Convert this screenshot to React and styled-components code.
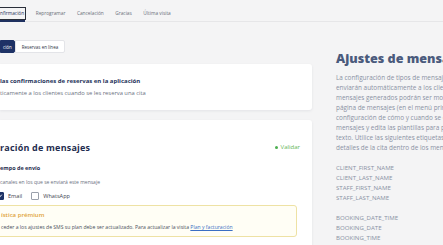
import React from "react"
import styled, { createGlobalStyle } from "styled-components"

const GlobalStyle = createGlobalStyle`
  html, body {
    margin: 0;
    padding: 0;
    background: #f4f4f5;
    overflow: hidden;
  }
  body {
    font-family: "Open Sans", "Liberation Sans", sans-serif;
    color: #3a3f4b;
  }
`

const tabs = ["nfirmación", "Reprogramar", "Cancelación", "Gracias", "Última visita"]

const paragraph = [
  "La configuración de tipos de mensajes que se",
  "enviarán automáticamente a los clientes. Los",
  "mensajes generados podrán ser modificados en la",
  "página de mensajes (en el menú principal). Cambia la",
  "configuración de cómo y cuando se envían los",
  "mensajes y edita las plantillas para personalizar el",
  "texto. Utilice las siguientes etiquetas para insertar los",
  "detalles de la cita dentro de los mensajes:",
]

const tagGroups = [
  ["CLIENT_FIRST_NAME", "CLIENT_LAST_NAME", "STAFF_FIRST_NAME", "STAFF_LAST_NAME"],
  ["BOOKING_DATE_TIME", "BOOKING_DATE", "BOOKING_TIME"],
]

const App = () => {
  return (
    <>
      <GlobalStyle />
      <Screen>
        <TabBar>
          {tabs.map((t, i) => (
            <Tab key={t} active={i === 0}>
              <TabLabel active={i === 0}>{t}</TabLabel>
            </Tab>
          ))}
        </TabBar>
        <Columns>
          <Main>
            <ToggleGroup>
              <ToggleButton active>ción</ToggleButton>
              <ToggleButton>Reservas en línea</ToggleButton>
            </ToggleGroup>

            <Card>
              <CardTitle>las confirmaciones de reservas en la aplicación</CardTitle>
              <CardText>ticamente a los clientes cuando se les reserva una cita</CardText>
            </Card>

            <Card tall>
              <CardHeader>
                <BigTitle>ración de mensajes</BigTitle>
                <Status>Validar</Status>
              </CardHeader>
              <SectionTitle>empo de envío</SectionTitle>
              <SectionHint>canales en los que se enviará este mensaje</SectionHint>
              <CheckRow>
                <CheckItem>
                  <Box checked>
                    <svg width="6" height="6" viewBox="0 0 10 10">
                      <path d="M2 5.2l2 2 4-4.4" fill="none" stroke="#fff" strokeWidth="1.6" />
                    </svg>
                  </Box>
                  Email
                </CheckItem>
                <CheckItem>
                  <Box />
                  WhatsApp
                </CheckItem>
              </CheckRow>
              <Premium>
                <PremiumTitle>ística prémium</PremiumTitle>
                <PremiumText>
                  ceder a los ajustes de SMS su plan debe ser actualizado. Para actualizar la visita{" "}
                  <a href="#plan">Plan y facturación</a>
                </PremiumText>
              </Premium>
            </Card>
          </Main>

          <Aside>
            <AsideTitle>Ajustes de mensajes</AsideTitle>
            <AsideText>
              {paragraph.map(l => (
                <div key={l}>{l}</div>
              ))}
            </AsideText>
            {tagGroups.map((g, i) => (
              <TagList key={i}>
                {g.map(t => (
                  <div key={t}>{t}</div>
                ))}
              </TagList>
            ))}
          </Aside>
        </Columns>
      </Screen>
    </>
  )
}

export default App

const Screen = styled.div`
  width: 443px;
  height: 245px;
  overflow: hidden;
`

const TabBar = styled.div`
  display: flex;
  height: 21px;
  border-bottom: 1px solid #e6e6e8;
  gap: 10.5px;
`

const Tab = styled.div`
  display: flex;
  align-items: center;
  padding-top: 6px;
  margin-bottom: -1px;
  border-bottom: 2px solid ${p => (p.active ? "#1f3160" : "transparent")};
`

const TabLabel = styled.span`
  font-size: 4.8px;
  line-height: 9px;
  padding: 1px 1px 1px 0;
  color: ${p => (p.active ? "#1f2f55" : "#6a6f7a")};
  outline: ${p => (p.active ? "1px solid #2a2f3a" : "none")};
`

const Columns = styled.div`
  display: grid;
  grid-template-columns: 312px 1fr;
`

const Main = styled.div`
  display: flex;
  flex-direction: column;
  padding-top: 18px;
`

const ToggleGroup = styled.div`
  display: flex;
  height: 13px;
  margin-bottom: 11px;
`

const ToggleButton = styled.div`
  display: flex;
  align-items: center;
  font-size: 4.5px;
  padding: 0 ${p => (p.active ? "2px" : "6px")};
  background: ${p => (p.active ? "#1e3266" : "#fff")};
  color: ${p => (p.active ? "#fff" : "#2d3444")};
  border: 1px solid ${p => (p.active ? "#1e3266" : "#e3e4e8")};
  border-radius: 0 2px 2px 0;
`

const Card = styled.div`
  background: #fff;
  border-radius: 0 3px 3px 0;
  box-shadow: 0 1px 3px rgba(30, 40, 70, 0.08);
  padding: ${p => (p.tall ? "20px 12px 20px 0" : "13px 12px 0 0")};
  height: ${p => (p.tall ? "auto" : "46px")};
  box-sizing: border-box;
  margin-bottom: 10px;
`

const CardTitle = styled.div`
  font-size: 6px;
  font-weight: 700;
  line-height: 9px;
  color: #24335a;
`

const CardText = styled.div`
  font-size: 5.8px;
  line-height: 8px;
  margin-top: 3px;
  color: #6b7180;
`

const CardHeader = styled.div`
  display: flex;
  align-items: center;
  justify-content: space-between;
  height: 14px;
`

const BigTitle = styled.div`
  font-weight: 700;
  font-size: 9px;
  letter-spacing: 0.2px;
  color: #1f2d4f;
`

const Status = styled.div`
  display: flex;
  align-items: center;
  gap: 3px;
  font-size: 6px;
  color: #64b557;
  &::before {
    content: "";
    width: 3px;
    height: 3px;
    border-radius: 50%;
    background: #4caf50;
  }
`

const SectionTitle = styled.div`
  margin-top: 10px;
  font-size: 5.5px;
  font-weight: 700;
  line-height: 9px;
  color: #1f2d4f;
`

const SectionHint = styled.div`
  margin-top: 5px;
  font-size: 5px;
  line-height: 8px;
  color: #6b7180;
`

const CheckRow = styled.div`
  display: flex;
  gap: 9px;
  margin-top: 5px;
  margin-left: -4px;
  height: 10px;
  align-items: center;
`

const CheckItem = styled.div`
  display: flex;
  align-items: center;
  gap: 4px;
  font-size: 5.6px;
  color: #3d4350;
`

const Box = styled.div`
  width: 8px;
  height: 8px;
  box-sizing: border-box;
  border-radius: 1px;
  display: flex;
  align-items: center;
  justify-content: center;
  background: ${p => (p.checked ? "#1e3266" : "#fff")};
  border: 1px solid ${p => (p.checked ? "#1e3266" : "#9aa0ab")};
`

const Premium = styled.div`
  margin-top: 4px;
  margin-left: -10px;
  margin-right: 3px;
  padding: 5px 8px 5px 10px;
  height: 32px;
  box-sizing: border-box;
  background: #fffef5;
  border: 1px solid #eee2a4;
  border-radius: 3px;
`

const PremiumTitle = styled.div`
  font-size: 6px;
  font-weight: 600;
  line-height: 9px;
  color: #e0a43a;
`

const PremiumText = styled.div`
  margin-top: 3px;
  font-size: 5.1px;
  line-height: 8px;
  color: #4a505c;
  white-space: nowrap;
  a {
    color: #3b6fc4;
    text-decoration: underline;
  }
`

const Aside = styled.div`
  padding: 28px 0 0 24px;
  white-space: nowrap;
`

const AsideTitle = styled.div`
  font-weight: 800;
  font-size: 12.6px;
  line-height: 18px;
  color: #4a5a7c;
`

const AsideText = styled.div`
  margin-top: 5px;
  font-size: 6.4px;
  line-height: 10px;
  color: #8a92a4;
`

const TagList = styled.div`
  margin-top: 10px;
  font-size: 6.1px;
  line-height: 10px;
  color: #8a92a4;
`
